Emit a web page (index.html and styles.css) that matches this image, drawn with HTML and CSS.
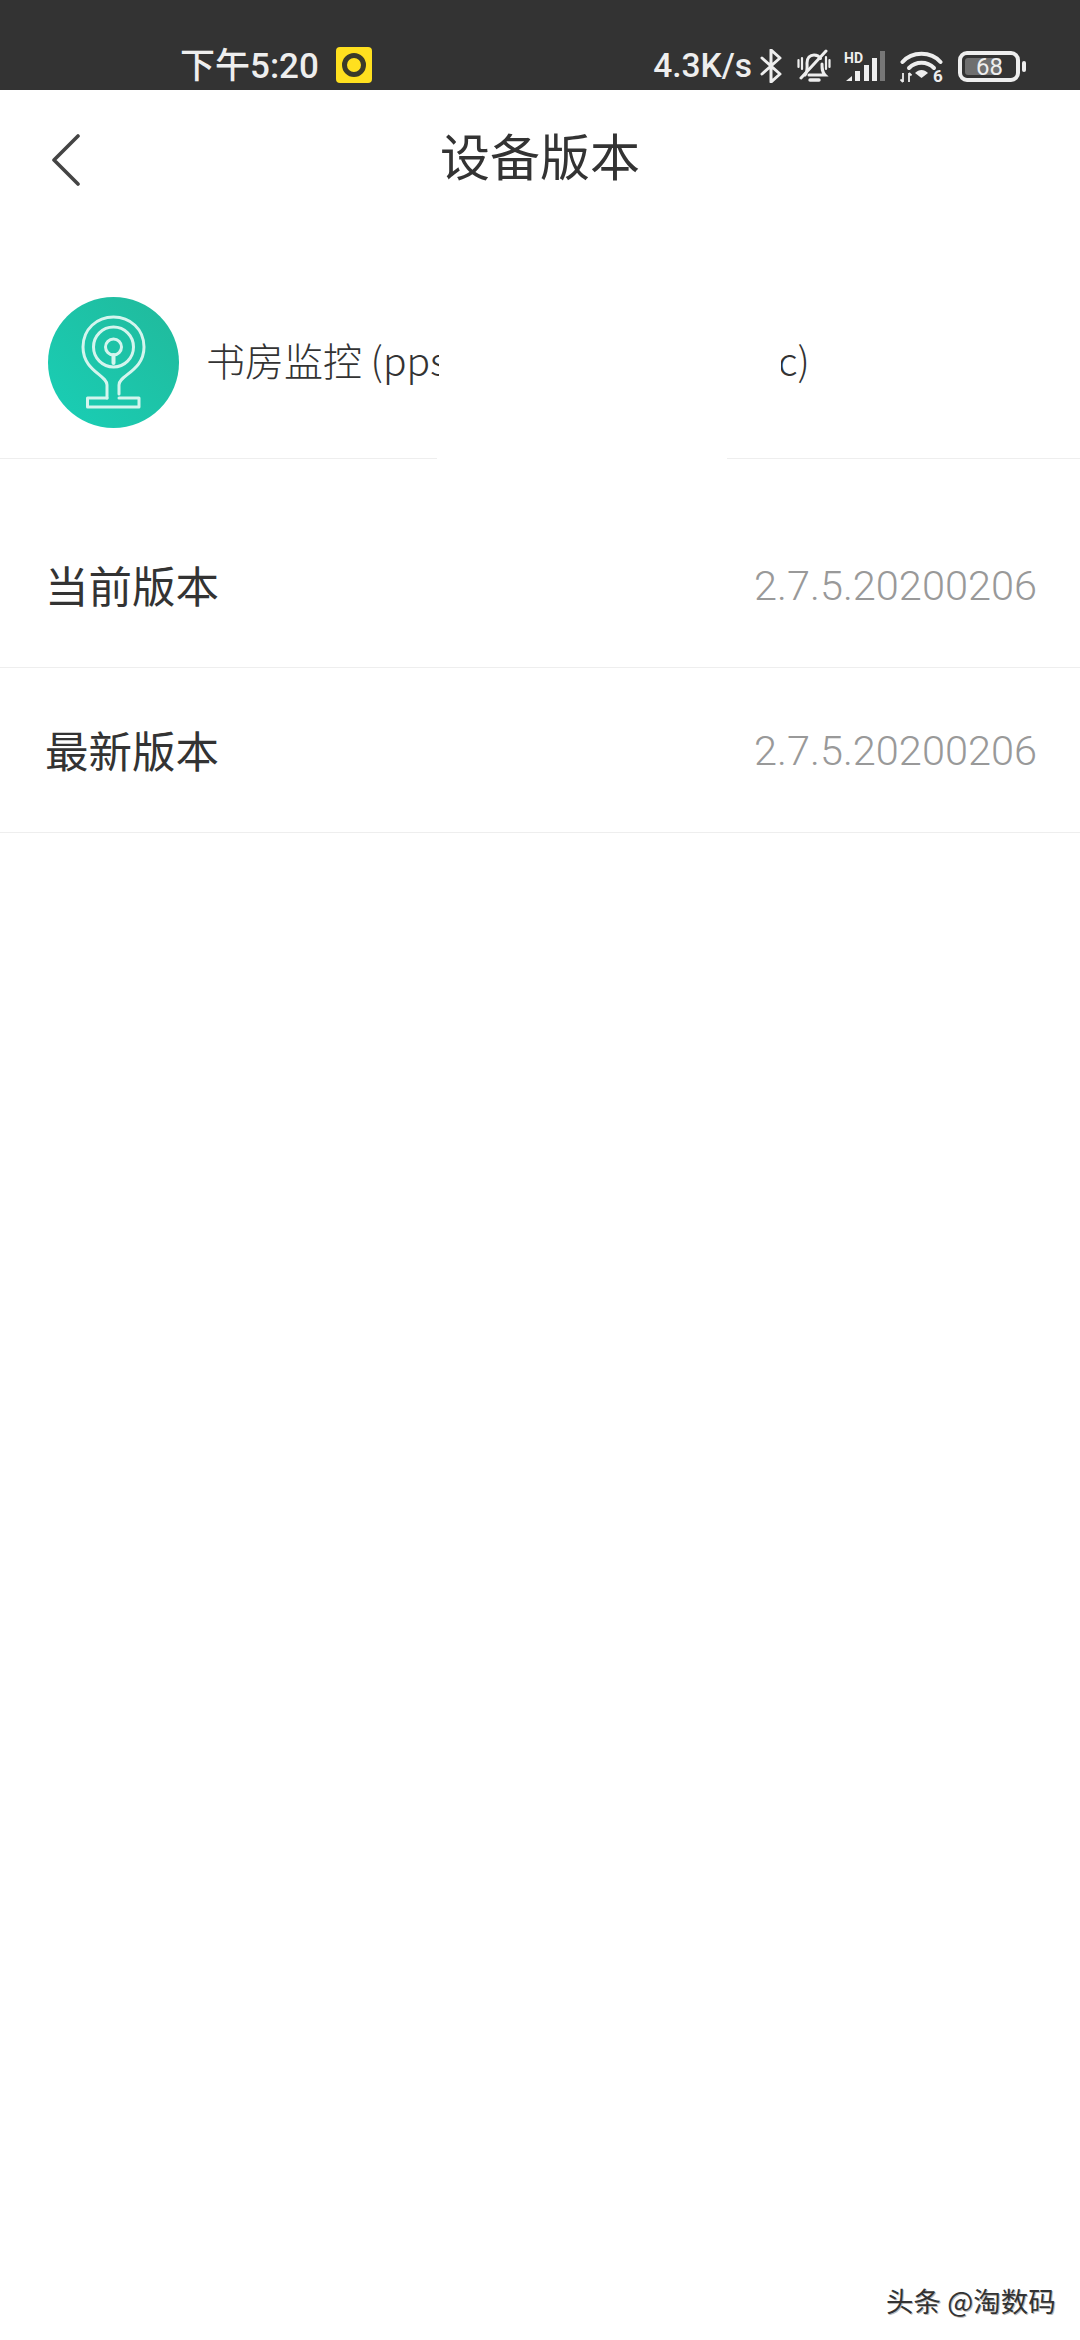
FILE: index.html
```html
<!DOCTYPE html>
<html lang="zh">
<head>
<meta charset="utf-8">
<title>设备版本</title>
<link rel="stylesheet" href="styles.css">
</head>
<body>
<div class="page">
  <header class="status">
    <div class="status-left">
      <span class="time">下午5:20</span>
      <span class="app-badge"><span class="app-ring"></span></span>
    </div>
    <div class="status-right">
      <span class="speed">4.3K/s</span>
      <svg class="ic-bt" width="22" height="34" viewBox="0 0 22 34"><path d="M2 9 L20 25 L11 33 V1 L20 9 L2 25" fill="none" stroke="#eee" stroke-width="3" stroke-linejoin="round" stroke-linecap="round"/></svg>
      <svg class="ic-bell" width="34" height="34" viewBox="0 0 34 34"><g fill="none" stroke="#eee" stroke-width="3" stroke-linecap="round"><path d="M8 26 C11 22 10 18 10 14 C10 9 13 6 17 6 C20 6 22 7 23.5 9.5"/><path d="M25 15 C25 20 25 23 28 26 H12"/><path d="M4 29 L29 2" stroke-width="3"/><path d="M1.5 11 V18 M5 9 V20 M29 8 V20 M32.5 11 V18" stroke-width="2.2"/><path d="M13 31 H22" stroke-width="3.4"/></g></svg>
      <svg class="ic-signal" width="41" height="31" viewBox="0 0 41 31"><text x="0" y="12" class="hd">HD</text><path d="M2 30 L8 25 V30 Z" fill="#eee"/><rect x="11" y="20" width="5" height="10" fill="#eee"/><rect x="20" y="14" width="5" height="16" fill="#eee"/><rect x="28" y="7" width="5" height="23" fill="#eee"/><rect x="36" y="0" width="5" height="30" fill="#777"/></svg>
      <svg class="ic-wifi" width="44" height="34" viewBox="0 0 44 34"><g fill="none" stroke="#eee" stroke-width="4" stroke-linecap="round"><path d="M2.5 13 C12 2 31 2 40.5 13"/><path d="M9 19 C16 12 27 12 34 19"/></g><path d="M15 24 C19 20 24 20 28 24 L21.5 29 Z" fill="#eee"/><path d="M3 24 V33 M0.5 30.5 L3 33 M9 24 V33 M11.5 26.5 L9 24" stroke="#eee" stroke-width="1.8" fill="none"/><text x="33" y="33" class="six">6</text></svg>
      <svg class="ic-batt" width="68" height="31" viewBox="0 0 68 31"><rect x="2" y="2" width="58" height="27" rx="7" fill="none" stroke="#eee" stroke-width="4"/><rect x="7" y="7" width="36" height="17" rx="3" fill="#6f6f6f"/><text x="18" y="24" class="batt">68</text><rect x="64" y="10" width="4" height="11" rx="2" fill="#eee"/></svg>
    </div>
  </header>

  <nav class="nav">
    <svg class="back" width="30" height="52" viewBox="0 0 30 52"><path d="M27 2 L3 26 L27 50" fill="none" stroke="#444" stroke-width="3.6" stroke-linecap="round" stroke-linejoin="round"/></svg>
    <h1 class="title">设备版本</h1>
  </nav>

  <section class="device">
    <div class="avatar">
      <svg width="131" height="131" viewBox="0 0 131 131"><g fill="none" stroke="#d4f5ee" stroke-width="3" stroke-linejoin="round" stroke-linecap="round"><path d="M59 101 V88 C59 78 35 74 35 50 C35 32 49 20 65.5 20 C82 20 96 32 96 50 C96 74 71 78 71 88 V97"/><circle cx="65.5" cy="50" r="20"/><circle cx="65.5" cy="50" r="8"/><path d="M65.5 58 V66" stroke-width="4"/><path d="M59 101 H39.5 V110 H91 V101 H71"/></g></svg>
    </div>
    <div class="device-name">
      <span class="name-start">书房监控 (pps</span>
      <span class="name-end">c)</span>
    </div>
    <div class="redaction-text"></div>
    <div class="redaction-line"></div>
  </section>

  <section class="versions">
    <div class="row"><span class="label">当前版本</span><span class="value">2.7.5.20200206</span></div>
    <div class="row"><span class="label">最新版本</span><span class="value">2.7.5.20200206</span></div>
  </section>

  <div class="watermark">头条 @淘数码</div>
</div>
</body>
</html>
```

FILE: styles.css
```css
* { box-sizing: border-box; }
html, body { margin: 0; padding: 0; background: #fff; }
body { font-family: "Noto Sans CJK SC", "Noto Sans", sans-serif; }
.page { position: relative; width: 1080px; height: 2340px; overflow: hidden; display: flex; flex-direction: column; background: #fff; }

.status { height: 90px; background: #333; display: flex; justify-content: space-between; align-items: flex-end; padding: 0 54px 6px 180px; color: #eee; flex: none; }
.status-left { display: flex; align-items: center; gap: 17px; height: 38px; }
.time { font-size: 35px; line-height: 38px; padding-top: 3px; font-family: "Roboto", "Noto Sans CJK SC", sans-serif; font-weight: 500; }
.app-badge { width: 36px; height: 36px; border-radius: 4px; background: #ffe01f; display: flex; align-items: center; justify-content: center; }
.app-ring { width: 24px; height: 24px; border-radius: 50%; border: 5px solid #3a3a2a; }
.status-right { display: flex; align-items: center; height: 36px; }
.speed { font-family: "Roboto", sans-serif; font-weight: 500; font-size: 33.5px; line-height: 36px; margin-right: 8px; }
.ic-bell { margin-left: 15px; }
.ic-signal { margin-left: 13px; }
.ic-wifi { margin-left: 15px; }
.ic-batt { margin-left: 14px; }
.hd { font: 700 14px "Roboto", sans-serif; fill: #eee; }
.six { font: 700 17px "Roboto", sans-serif; fill: #eee; }
.batt { font: 400 24px "Roboto", sans-serif; fill: #eee; }

.nav { height: 134px; flex: none; display: flex; align-items: center; justify-content: center; position: relative; }
.back { position: absolute; left: 51px; top: 44px; }
.title { margin: 0 0 6px; font-size: 50px; font-weight: 400; color: #333; line-height: 60px; }

.device { position: relative; height: 235px; flex: none; padding: 73px 0 0 48px; display: flex; align-items: flex-start; gap: 27px; border-bottom: 1px solid #eee; }
.avatar { width: 131px; height: 131px; border-radius: 50%; background: linear-gradient(45deg, #19cfb6, #21b99b); flex: none; }
.avatar svg { display: block; }
.device-name { display: flex; height: 123px; align-items: center; font-size: 39px; font-weight: 300; color: #333; line-height: 50px; }
.name-start { width: 300px; white-space: nowrap; }
.name-end { margin-left: 272px; font-weight: 300; }
.redaction-text { position: absolute; left: 439px; top: 60px; width: 342px; height: 130px; background: #fff; }
.redaction-line { position: absolute; left: 437px; top: 190px; width: 290px; height: 46px; background: #fff; }

.versions { padding-top: 44px; }
.row { height: 165px; display: flex; align-items: center; justify-content: space-between; padding: 0 43px 0 45px; border-bottom: 1px solid #eee; }
.label { font-size: 43.5px; color: #333; font-weight: 400; margin-bottom: 2px; }
.value { font-family: "Roboto", sans-serif; font-weight: 300; font-size: 41.5px; color: #999; }

.watermark { position: absolute; left: 886px; top: 2282px; font-size: 27.5px; font-weight: 400; line-height: 36px; color: #333; white-space: nowrap; text-shadow: 1px 1px 0 #bbb; }
```
